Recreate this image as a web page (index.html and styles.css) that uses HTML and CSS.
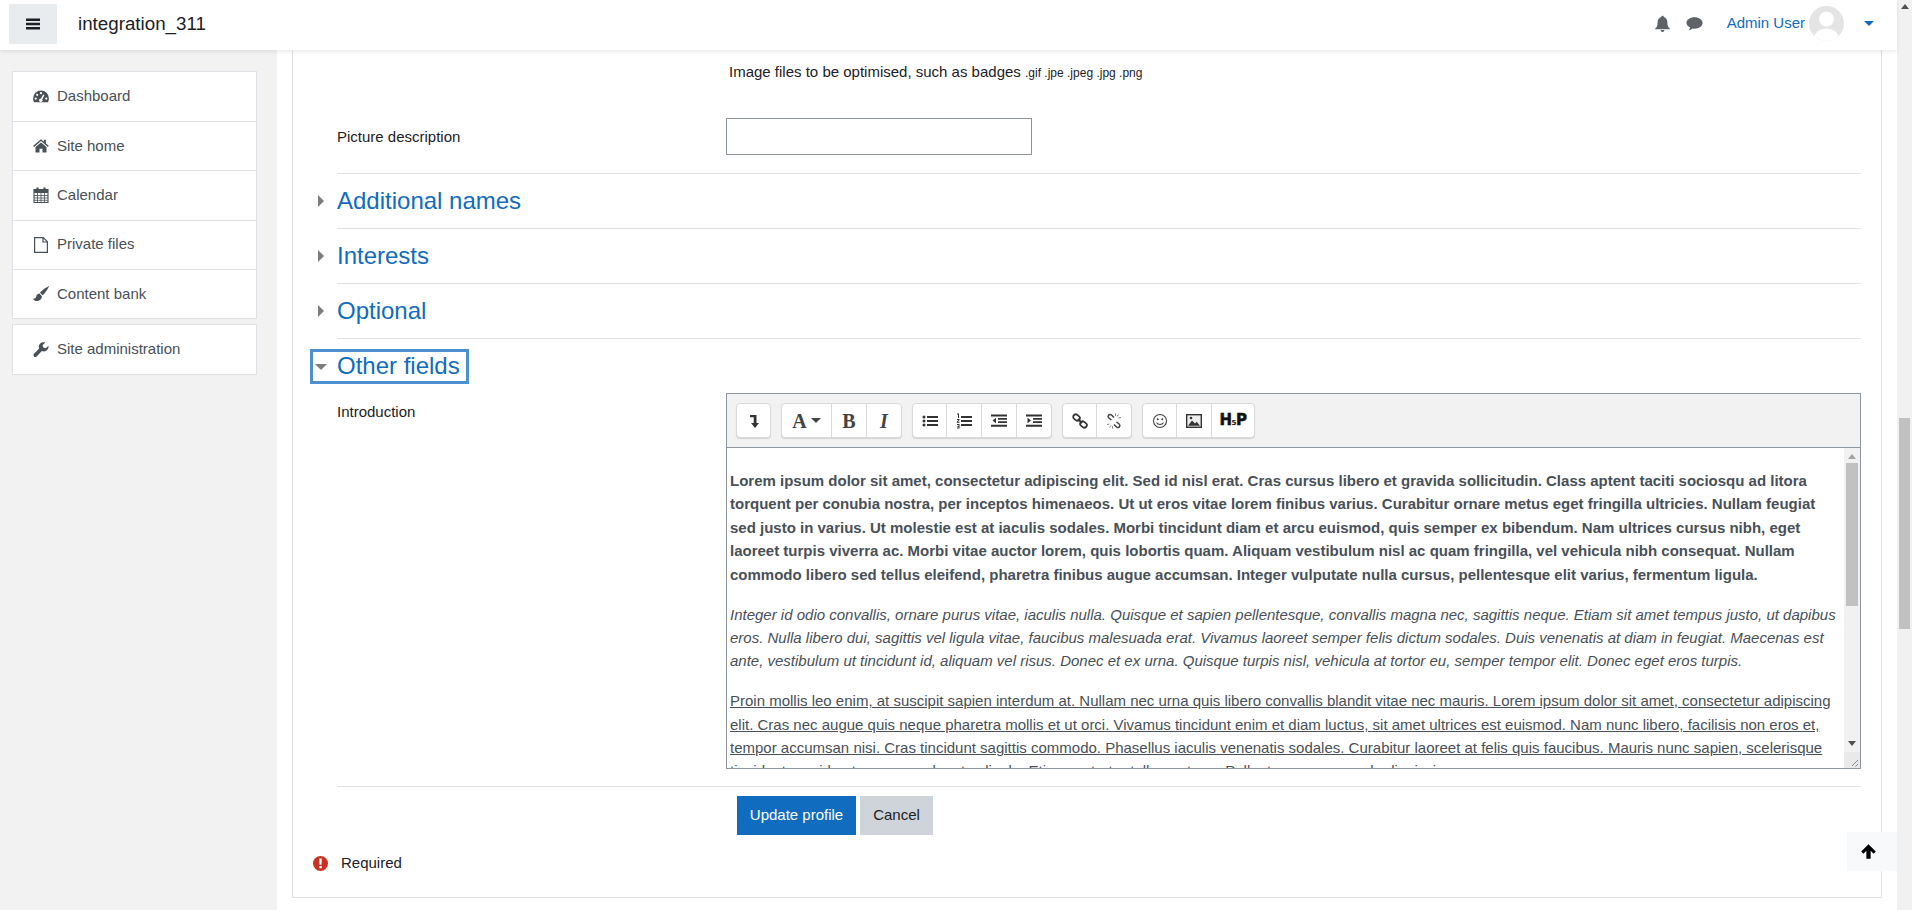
FILE: index.html
```html
<!DOCTYPE html>
<html lang="en">
<head>
<meta charset="utf-8">
<title>integration_311</title>
<link rel="stylesheet" href="styles.css">
</head>
<body>
<div class="app">
  <div class="viewport">
    <header class="topbar">
      <button class="menu-btn" aria-label="Menu"><svg width="14" height="14" viewBox="0 0 14 14"><path d="M0 1.500h14v2.400H0zM0 5.800h14v2.400H0zM0 10.100h14v2.400H0z" fill="#1d2125"/></svg></button>
      <span class="brand">integration_311</span>
      <div class="top-right">
        <svg class="top-icon" width="17" height="19" viewBox="0 0 16 16"><path d="M8 .6a1.200 1.200 0 0 1 1.200 1.300C11.500 2.500 12.600 4.600 12.600 7c0 3 .8 4.400 2.200 5.500v1H1.200v-1C2.600 11.400 3.400 10 3.400 7c0-2.400 1.100-4.500 3.400-5.100A1.200 1.200 0 0 1 8 .6zM6.200 14.200h3.600a1.800 1.800 0 0 1-3.600 0z" fill="#5f6368"/></svg>
        <svg class="top-icon chat" width="17" height="17" viewBox="0 0 16 16"><path d="M8 2.200c4.200 0 7.600 2.400 7.600 5.400s-3.400 5.400-7.600 5.400c-.7 0-1.300-.1-2-.2-1 .9-2.300 1.500-3.700 1.700.8-.9 1.400-1.800 1.600-2.800C1.900 10.700.4 9.300.4 7.600.4 4.600 3.800 2.200 8 2.200z" fill="#5f6368"/></svg>
        <a class="user-name">Admin User</a>
        <svg class="avatar" width="35" height="35" viewBox="0 0 35 35"><defs><clipPath id="avatar-clip"><circle cx="17.500" cy="17.500" r="17.500"/></clipPath></defs><g clip-path="url(#avatar-clip)"><rect width="35" height="35" fill="#e4e4e4"/><circle cx="17.500" cy="13" r="7.500" fill="#fff"/><ellipse cx="17.500" cy="32" rx="12" ry="9.500" fill="#fff"/></g></svg>
        <span class="user-caret"></span>
      </div>
    </header>
    <div class="below">
      <nav class="sidebar">
        <ul class="nav-block">
          <li class="nav-item"><svg class="nav-icon" width="16" height="16" viewBox="0 0 16 16"><path d="M8 1.500A7.900 7.900 0 0 0 .1 9.400c0 1.500.3 2.800 1 3.900h13.800c.7-1.100 1-2.400 1-3.900A7.900 7.900 0 0 0 8 1.500z" fill="#495057"/><circle cx="8" cy="4.200" r="1.100" fill="#fff"/><circle cx="4.200" cy="5.800" r="1.100" fill="#fff"/><circle cx="2.700" cy="9.600" r="1.100" fill="#fff"/><circle cx="13.300" cy="9.600" r="1.100" fill="#fff"/><path d="M7.800 11.500l3-5.700" stroke="#fff" stroke-width="1.500"/><circle cx="7.800" cy="11.200" r="1.700" fill="#fff"/></svg>Dashboard</li>
          <li class="nav-item"><svg class="nav-icon" width="16" height="16" viewBox="0 0 16 16"><path d="M8 1.200L.2 7.800l.9 1.100L8 3.100l6.900 5.800.9-1.100-2.900-2.400V1.800h-2.100v1.900zM8 4.500L2.500 9.100V14.500h4v-3.800h3v3.800h4V9.100z" fill="#495057"/></svg>Site home</li>
          <li class="nav-item"><svg class="nav-icon" width="16" height="16" viewBox="0 0 16 16"><path d="M1 2.500h14v13H1z" fill="#fff"/><path d="M1 2.500h14v13H1z" fill="none" stroke="#495057" stroke-width="1.100"/><path d="M1 2.500h14v3.500H1z" fill="#495057"/><path d="M4.500 .5v4M11.500 .5v4" stroke="#495057" stroke-width="2.200"/><path d="M1 8.500h14M1 11h14M1 13.300h14M4.500 6v9M8 6v9M11.500 6v9" stroke="#495057" stroke-width=".8"/></svg>Calendar</li>
          <li class="nav-item"><svg class="nav-icon" width="16" height="16" viewBox="0 0 16 16"><path d="M1.600.6h8.700l4.100 4.100v10.700H1.600zM10 .6v4.400h4.400" fill="none" stroke="#495057" stroke-width="1.200"/></svg>Private files</li>
          <li class="nav-item"><svg class="nav-icon" width="16" height="16" viewBox="0 0 16 16"><path d="M16 0c-1.200.5-7.200 4.200-9 6.700l2.600 2.600C12 7.500 15.800 1.500 16 0zM6.500 7.500C4.800 7.600 3.500 8.800 3.300 10.500c-.1 1.300-1.200 2-3.300 2.200 1 1.700 3.200 2.700 5 2.200 2.300-.5 4-2.200 3.900-4.600z" fill="#495057"/></svg>Content bank</li>
        </ul>
        <ul class="nav-block">
          <li class="nav-item"><svg class="nav-icon" width="16" height="16" viewBox="0 0 16 16"><path d="M15.500 3.700l-2.800 2.500-2.400-.6-.7-2.400L12.200.6C10.400-.1 8 .4 6.800 1.900 5.700 3.200 5.500 5 6.200 6.500L1 11.800c-.7.700-.7 1.900 0 2.600s1.900.7 2.600 0l5.300-5.300c1.500.7 3.300.4 4.600-.7 1.400-1.200 2.300-2.900 2-4.700z" fill="#495057"/></svg>Site administration</li>
        </ul>
      </nav>
      <main class="main">
        <form class="card">
          <div class="form-row first-row">
            <div></div>
            <div class="filetypes">Image files to be optimised, such as badges <small class="exts">.gif .jpe .jpeg .jpg .png</small></div>
          </div>
          <div class="form-row desc-row">
            <label class="field-label">Picture description</label>
            <input class="text-input" type="text">
          </div>
          <section class="section"><span class="caret-right"></span><a class="sec-title">Additional names</a></section>
          <section class="section"><span class="caret-right"></span><a class="sec-title">Interests</a></section>
          <section class="section"><span class="caret-right"></span><a class="sec-title">Optional</a></section>
          <section class="section open">
            <div class="focus-box"><span class="caret-down"></span><a class="sec-title">Other fields</a></div>
          </section>
          <div class="form-row editor-row">
            <label class="field-label intro-label">Introduction</label>
            <div class="editor">
              <div class="toolbar">
                <div class="tb-group">
                  <span class="tb-btn"><svg width="16" height="16" viewBox="0 0 16 16"><path d="M4 2h6.500v8H13l-4 5-4-5h2.700V4.300H4z" fill="#333"/></svg></span>
                </div>
                <div class="tb-group">
                  <span class="tb-btn tb-wide"><span class="glyph-a">A</span><span class="tb-caret"></span></span>
                  <span class="tb-btn"><span class="glyph-b">B</span></span>
                  <span class="tb-btn"><span class="glyph-i">I</span></span>
                </div>
                <div class="tb-group">
                  <span class="tb-btn"><svg width="16" height="16" viewBox="0 0 16 16"><path d="M5 3h11v2H5zM5 7h11v2H5zM5 11h11v2H5z" fill="#333"/><circle cx="2" cy="4" r="1.500" fill="#333"/><circle cx="2" cy="8" r="1.500" fill="#333"/><circle cx="2" cy="12" r="1.500" fill="#333"/></svg></span>
                  <span class="tb-btn"><svg width="16" height="16" viewBox="0 0 16 16"><path d="M5 3h11v2H5zM5 7h11v2H5zM5 11h11v2H5z" fill="#333"/><path d="M1 .5h2v4.500H2V1.500H1zM1 6h2.500v1L2 8.700h1.500v1H.8v-1L2.400 7H1zM1 11h2.500v4.500H1v-1h1.500v-.7H1.300v-.9h1.200V12H1z" fill="#333"/></svg></span>
                  <span class="tb-btn"><svg width="16" height="16" viewBox="0 0 16 16"><path d="M0 1.500h16v2H0zM7 5h9v1.800H7zM7 8.200h9V10H7zM0 11.800h16v2H0zM5 4.800v5.400L1.500 7.500z" fill="#333"/></svg></span>
                  <span class="tb-btn"><svg width="16" height="16" viewBox="0 0 16 16"><path d="M0 1.500h16v2H0zM7 5h9v1.800H7zM7 8.200h9V10H7zM0 11.800h16v2H0zM1.500 4.800v5.400L5 7.500z" fill="#333"/></svg></span>
                </div>
                <div class="tb-group">
                  <span class="tb-btn"><svg width="16" height="16" viewBox="0 0 16 16"><g fill="none" stroke="#333" stroke-width="1.800"><rect x="1" y="2" width="7" height="5" rx="2.500" transform="rotate(38 4.500 4.500)"/><rect x="8" y="9" width="7" height="5" rx="2.500" transform="rotate(38 11.500 11.500)"/></g><path d="M6 6l4 4" stroke="#333" stroke-width="2"/></svg></span>
                  <span class="tb-btn"><svg width="16" height="16" viewBox="0 0 16 16"><g fill="none" stroke="#444" stroke-width="1.500"><path d="M8 4.500L5.500 2a2 2 0 0 0-3 .3 2 2 0 0 0 .4 2.700L5.500 7"/><path d="M8 11.500l2.500 2.500a2 2 0 0 0 3-.3 2 2 0 0 0-.4-2.700L10.500 9"/></g><path d="M9.500 .5v2.500M12.500 1.500L11 3.500M15 4.500l-2.500.5M1 11.500l2.500-.5M3.500 14.500L5 12.500M6.500 15.500V13" stroke="#777" stroke-width=".9"/></svg></span>
                </div>
                <div class="tb-group">
                  <span class="tb-btn"><svg width="16" height="16" viewBox="0 0 16 16"><circle cx="8" cy="8" r="6.500" fill="none" stroke="#444" stroke-width="1.100"/><circle cx="5.700" cy="6.200" r="1" fill="#444"/><circle cx="10.300" cy="6.200" r="1" fill="#444"/><path d="M4.500 9.500c1.500 2.600 5.500 2.600 7 0" fill="none" stroke="#444" stroke-width="1.100"/></svg></span>
                  <span class="tb-btn"><svg width="16" height="16" viewBox="0 0 16 16"><rect x=".7" y="1.700" width="14.600" height="12.600" fill="#eee" stroke="#333" stroke-width="1.400"/><path d="M2 12.800l4-5.300 3 3 1.700-1.700 3.300 4z" fill="#333"/><circle cx="5" cy="5" r="1.300" fill="#333"/></svg></span>
                  <span class="tb-btn tb-h5p"><span class="h5p">H<small class="h5p-five">5</small>P</span></span>
                </div>
              </div>
              <div class="editor-body">
                <div class="editable">
                  <p class="lorem-bold">Lorem ipsum dolor sit amet, consectetur adipiscing elit. Sed id nisl erat. Cras cursus libero et gravida sollicitudin. Class aptent taciti sociosqu ad litora torquent per conubia nostra, per inceptos himenaeos. Ut ut eros vitae lorem finibus varius. Curabitur ornare metus eget fringilla ultricies. Nullam feugiat sed justo in varius. Ut molestie est at iaculis sodales. Morbi tincidunt diam et arcu euismod, quis semper ex bibendum. Nam ultrices cursus nibh, eget laoreet turpis viverra ac. Morbi vitae auctor lorem, quis lobortis quam. Aliquam vestibulum nisl ac quam fringilla, vel vehicula nibh consequat. Nullam commodo libero sed tellus eleifend, pharetra finibus augue accumsan. Integer vulputate nulla cursus, pellentesque elit varius, fermentum ligula.</p>
                  <p class="lorem-italic">Integer id odio convallis, ornare purus vitae, iaculis nulla. Quisque et sapien pellentesque, convallis magna nec, sagittis neque. Etiam sit amet tempus justo, ut dapibus eros. Nulla libero dui, sagittis vel ligula vitae, faucibus malesuada erat. Vivamus laoreet semper felis dictum sodales. Duis venenatis at diam in feugiat. Maecenas est ante, vestibulum ut tincidunt id, aliquam vel risus. Donec et ex urna. Quisque turpis nisl, vehicula at tortor eu, semper tempor elit. Donec eget eros turpis.</p>
                  <p class="lorem-under">Proin mollis leo enim, at suscipit sapien interdum at. Nullam nec urna quis libero convallis blandit vitae nec mauris. Lorem ipsum dolor sit amet, consectetur adipiscing elit. Cras nec augue quis neque pharetra mollis et ut orci. Vivamus tincidunt enim et diam luctus, sit amet ultrices est euismod. Nam nunc libero, facilisis non eros et, tempor accumsan nisi. Cras tincidunt sagittis commodo. Phasellus iaculis venenatis sodales. Curabitur laoreet at felis quis faucibus. Mauris nunc sapien, scelerisque tincidunt gravida ut, ornare sed metus ligula. Etiam ac tortor tellus, rutrum. Pellentesque commodo dignissim.</p>
                </div>
                <div class="inner-scroll">
                  <span class="arrow-up small"></span>
                  <div class="inner-track"><div class="inner-thumb"></div></div>
                  <span class="arrow-down small"></span>
                  <div class="resizer"><svg width="16" height="16" viewBox="0 0 16 16"><path d="M14 8l-6 6M14 12l-2.500 2.500" stroke="#888" stroke-width="1"/></svg></div>
                </div>
              </div>
            </div>
          </div>
          <div class="actions">
            <button class="btn btn-primary" type="button">Update profile</button>
            <button class="btn btn-secondary" type="button">Cancel</button>
          </div>
          <div class="required">
            <svg class="req-icon" width="15" height="15" viewBox="0 0 15 15"><circle cx="7.500" cy="7.500" r="7.500" fill="#ca3120"/><path d="M6.200 2.500h2.600l-.3 6.300h-2zM6.300 10h2.400v2.300H6.300z" fill="#fff"/></svg>
            <span>Required</span>
          </div>
        </form>
      </main>
    </div>
    <a class="back-top" aria-label="Back to top"><svg width="15" height="15" viewBox="0 0 14 14"><path d="M7 .3l6.800 6.700-2 2-2.800-2.700V13.700H5V6.300L2.200 9 .2 7z" fill="#000"/></svg></a>
  </div>
  <div class="page-scroll">
    <span class="arrow-up"></span>
    <div class="page-thumb"></div>
  </div>
</div>
</body>
</html>
```
FILE: styles.css
```css
* { box-sizing: border-box; }
html, body { margin: 0; height: 100%; overflow: hidden; }
body { font-family: "Liberation Sans", Arial, sans-serif; font-size: 15px; line-height: 22.5px; color: #1d2125; background: #fff; }

.app { display: flex; height: 910px; }
.viewport { flex: 1; min-width: 0; display: flex; flex-direction: column; position: relative; }

.topbar { height: 50px; flex: none; display: flex; align-items: center; background: #fff; padding: 0 23px 0 9px; box-shadow: 0 2px 4px rgba(0,0,0,.08); position: relative; z-index: 2; }
.menu-btn { width: 48px; height: 40px; border: 0; background: #e9ecef; display: flex; align-items: center; justify-content: center; padding: 0; margin-top: -2px; }
.brand { margin-left: 21px; font-size: 18.75px; color: #1d2125; margin-top: -2px; }
.top-right { margin-left: auto; display: flex; align-items: center; margin-top: -4px; }
.top-icon { display: block; }
.top-icon.chat { margin-left: 15px; }
.user-name { margin-left: 24px; color: #0f6cbf; font-size: 15px; }
.avatar { margin-left: 4px; display: block; }
.user-caret { margin-left: 20px; width: 0; height: 0; border-left: 5px solid transparent; border-right: 5px solid transparent; border-top: 5px solid #0f6cbf; }

.below { flex: 1; min-height: 0; display: flex; }
.sidebar { width: 277px; flex: none; background: #f2f2f2; padding: 21px 20px 0 12px; }
.nav-block { list-style: none; margin: 0 0 5px; padding: 0; background: #fff; border: 1px solid #dee2e6; }
.nav-item { height: 49.300px; display: flex; align-items: center; padding: 0 0 0 20px; color: #495057; border-top: 1px solid #dee2e6; }
.nav-item:first-child { border-top: 0; height: 49px; }
.nav-icon { flex: none; margin-right: 8px; display: block; }

.main { flex: 1; min-width: 0; padding: 0 15px 12px; background: #fff; display: flex; }
.card { flex: 1; min-width: 0; border: 1px solid #dee2e6; border-top: 0; padding: 0 20px 0 44px; }

.form-row { display: grid; grid-template-columns: 389px 1fr; }
.first-row { padding-top: 11px; height: 68px; }
.filetypes { padding-left: 3px; }
.exts { font-size: 12px; }
.desc-row { height: 55px; align-items: start; }
.desc-row .field-label { line-height: 37px; }
.field-label { display: block; }
.text-input { width: 306px; height: 37px; border: 1px solid #8f959e; background: #fff; padding: 0; }

.section { height: 55px; border-top: 1px solid #dee2e6; display: flex; align-items: center; position: relative; }
.sec-title { font-size: 24px; line-height: 28px; color: #0f6cbf; }
.caret-right { position: absolute; left: -19px; top: 21px; width: 0; height: 0; border-top: 6.500px solid transparent; border-bottom: 6.500px solid transparent; border-left: 6.500px solid #7d7d7d; }
.section.open { align-items: flex-start; height: 55px; }
.focus-box { margin: 10px 0 0 -27px; width: 159px; height: 35px; border: 3px solid #4b91d1; display: flex; align-items: center; padding: 0 0 2px 2px; }
.caret-down { width: 0; height: 0; border-left: 6px solid transparent; border-right: 6px solid transparent; border-top: 6px solid #7d7d7d; margin: 2px 10px 0 0; }

.editor-row { align-items: start; }
.intro-label { padding-top: 8px; }
.editor { width: 1135px; height: 376px; border: 1px solid #8f959e; display: flex; flex-direction: column; }
.toolbar { height: 54px; flex: none; background: #f2f2f2; border-bottom: 1px solid #8f959e; display: flex; align-items: flex-start; padding: 9px 0 0 9px; gap: 10px; }
.tb-group { display: flex; height: 35px; background: #fff; border: 1px solid #d9d9d9; border-radius: 4px; box-shadow: 0 1px 1px rgba(0,0,0,.12); }
.tb-btn { width: 35px; height: 33px; display: flex; align-items: center; justify-content: center; border-left: 1px solid #d9d9d9; }
.tb-btn:first-child { border-left: 0; width: 33px; }
.tb-btn.tb-wide { width: 49px; }
.tb-btn.tb-h5p { width: 43px; }
.glyph-a, .glyph-b, .glyph-i { font-family: "Liberation Serif", serif; font-size: 20px; color: #444; line-height: 1; font-weight: 700; }
.glyph-i { font-style: italic; }
.tb-caret { margin-left: 4px; width: 0; height: 0; border-left: 5px solid transparent; border-right: 5px solid transparent; border-top: 5px solid #444; }
.h5p { font-family: "DejaVu Sans", sans-serif; font-weight: 700; font-size: 15px; letter-spacing: -.5px; color: #111; -webkit-text-stroke: .5px #111; line-height: 1; }
.h5p-five { font-size: 7px; -webkit-text-stroke: 0; }

.editor-body { flex: 1; min-height: 0; display: flex; background: #fff; }
.editable { flex: 1; min-width: 0; overflow: hidden; padding: 21px 4px 0 3px; color: #495057; font-size: 15px; line-height: 23.400px; }
.editable p { margin: 0 0 16.500px; }
.lorem-bold { font-weight: 700; }
.lorem-italic { font-style: italic; }
.lorem-under { text-decoration: underline; }

.inner-scroll { width: 16px; flex: none; background: #f1f1f1; display: flex; flex-direction: column; align-items: center; position: relative; }
.arrow-up, .arrow-down { display: block; flex: none; width: 0; height: 0; border-left: 4px solid transparent; border-right: 4px solid transparent; }
.arrow-up { border-bottom: 5px solid #505050; }
.arrow-down { border-top: 5px solid #505050; }
.arrow-up.small { margin-top: 6px; border-bottom-color: #a3a3a3; }
.inner-track { flex: 1; width: 100%; padding: 4px 2px 0; }
.inner-thumb { height: 143px; background: #c1c1c1; }
.resizer { height: 16px; width: 16px; flex: none; margin-top: 6px; background: #e9e9e9; }
.resizer svg { display: block; }

.actions { margin: 17px 0 0; border-top: 1px solid #dee2e6; padding: 9px 0 0 400px; display: flex; gap: 4px; }
.btn { height: 39px; border: 0; font: 15px/22.500px "Liberation Sans", Arial, sans-serif; padding: 0; }
.btn-primary { width: 119px; background: #0f6cbf; color: #fff; }
.btn-secondary { width: 73px; background: #ced4da; color: #1d2125; }
.required { display: flex; align-items: center; margin: 17px 0 0 -24px; }
.req-icon { margin-right: 13px; display: block; }

.back-top { position: absolute; right: 0; top: 832px; width: 50px; height: 39px; background: #f8f9fa; display: flex; align-items: center; justify-content: center; padding-right: 8px; }

.page-scroll { width: 15px; flex: none; background: #f1f1f1; display: flex; flex-direction: column; align-items: center; padding-top: 4px; }
.page-thumb { width: 11px; height: 211px; background: #c1c1c1; margin-top: 409px; }
```
